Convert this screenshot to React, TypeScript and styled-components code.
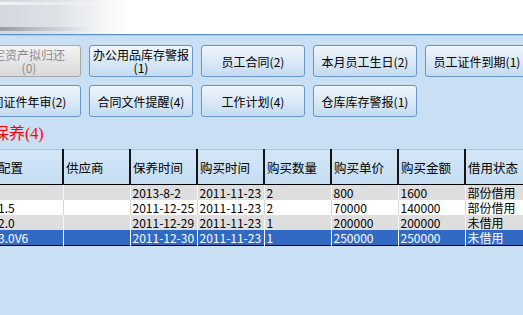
import { FC } from 'react';
import styled, { createGlobalStyle } from 'styled-components';

const GlobalStyle = createGlobalStyle`
  html, body {
    margin: 0;
    padding: 0;
    background: #ffffff;
    overflow: hidden;
  }
  body {
    font-family: "Noto Sans CJK SC", "DejaVu Sans", sans-serif;
    font-size: 12px;
  }
`;

const Page = styled.div`
  width: 523px;
  height: 315px;
  overflow: hidden;
  display: flex;
  flex-direction: column;
`;

const Banner = styled.div`
  height: 34px;
  flex: none;
  background:
    linear-gradient(to right, rgba(140, 146, 152, 0.85) 0px, rgba(170, 176, 182, 0.5) 45px, rgba(255, 255, 255, 0) 90px) 0 27px / 100% 4px no-repeat,
    linear-gradient(to right, rgba(255, 255, 255, 0.7) 0px, rgba(255, 255, 255, 0) 120px) 0 2px / 100% 3px no-repeat,
    linear-gradient(to right, #d2d8de 0px, #dde2e7 55px, #f2f4f6 100px, #ffffff 128px);
`;

const Panel = styled.div`
  flex: 1;
  border-top: 1px solid #5b94c9;
  box-shadow: inset 0 1px 0 #a9cbea;
  background: #c9dff3;
  display: flex;
  flex-direction: column;
`;

const ButtonGrid = styled.div`
  display: grid;
  grid-template-columns: repeat(5, 104px);
  grid-auto-rows: 32px;
  column-gap: 8px;
  row-gap: 8px;
  padding-top: 10px;
  margin-left: -23px;
`;

const NoticeButton = styled.button<{ $disabled?: boolean }>`
  box-sizing: border-box;
  padding: 0 2px;
  border-radius: 3px;
  border: 1px solid ${({ $disabled }) => ($disabled ? '#a8a8a8' : '#6796cb')};
  background: ${({ $disabled }) =>
    $disabled
      ? 'linear-gradient(to bottom, #f4f4f4 0%, #e6e6e6 50%, #d9d9d9 100%)'
      : 'linear-gradient(to bottom, #eef5fc 0%, #dbe9f7 50%, #c4dbf1 100%)'};
  color: ${({ $disabled }) => ($disabled ? '#8c8c8c' : '#000000')};
  font-family: "Noto Sans CJK SC", "DejaVu Sans", sans-serif;
  font-size: 12px;
  line-height: 13px;
  white-space: pre-line;
  text-align: center;
  overflow: hidden;
`;

const Title = styled.div`
  height: 32px;
  line-height: 34px;
  margin-left: -7px;
  color: #ff0000;
  font-family: "Liberation Serif", "Noto Sans CJK SC", serif;
  font-size: 16px;
`;

const Table = styled.table`
  border-collapse: collapse;
  table-layout: fixed;
  width: 536px;
  margin-left: -4px;
  border-top: 1px solid #a9cbea;
  border-bottom: 1px solid #000000;
`;

const Column = styled.col`
  width: 67px;
`;

const HeadCell = styled.th`
  height: 34px;
  padding: 0 2px;
  text-align: left;
  font-weight: normal;
  font-size: 12.5px;
  color: #000000;
  background: linear-gradient(to bottom, #d3e6f7 0%, #c5ddf2 100%);
  border-right: 2px solid #151515;
  border-bottom: 1px solid #000000;
  white-space: nowrap;
  overflow: hidden;
`;

const Row = styled.tr<{ $tone: 'grey' | 'white' | 'selected' }>`
  height: 15px;
  background: ${({ $tone }) =>
    $tone === 'selected' ? '#316ac5' : $tone === 'grey' ? '#dedede' : '#ffffff'};
  color: ${({ $tone }) => ($tone === 'selected' ? '#ffffff' : '#000000')};
  td {
    border-right: 1px solid ${({ $tone }) => ($tone === 'white' ? '#d4d4d4' : '#f6f6f6')};
  }
`;

const Cell = styled.td`
  height: 15px;
  padding: 0 2px;
  font-size: 12px;
  line-height: 15px;
  white-space: nowrap;
  overflow: hidden;
`;

const buttons: { label: string; disabled?: boolean }[] = [
  { label: '定资产拟归还\n(0)', disabled: true },
  { label: '办公用品库存警报\n(1)' },
  { label: '员工合同(2)' },
  { label: '本月员工生日(2)' },
  { label: '员工证件到期(1)' },
  { label: '同证件年审(2)' },
  { label: '合同文件提醒(4)' },
  { label: '工作计划(4)' },
  { label: '仓库库存警报(1)' },
];

const columns = ['配置', '供应商', '保养时间', '购买时间', '购买数量', '购买单价', '购买金额', '借用状态'];

const rows: { tone: 'grey' | 'white' | 'selected'; cells: string[] }[] = [
  { tone: 'grey', cells: ['', '', '2013-8-2', '2011-11-23', '2', '800', '1600', '部份借用'] },
  { tone: 'white', cells: ['1.5', '', '2011-12-25', '2011-11-23', '2', '70000', '140000', '部份借用'] },
  { tone: 'grey', cells: ['2.0', '', '2011-12-29', '2011-11-23', '1', '200000', '200000', '未借用'] },
  { tone: 'selected', cells: ['3.0V6', '', '2011-12-30', '2011-11-23', '1', '250000', '250000', '未借用'] },
];

const App: FC = () => {
  return (
    <Page>
      <GlobalStyle />
      <Banner />
      <Panel>
        <ButtonGrid>
          {buttons.map((b) => (
            <NoticeButton key={b.label} $disabled={b.disabled}>
              {b.label}
            </NoticeButton>
          ))}
        </ButtonGrid>
        <Title>保养(4)</Title>
        <Table>
          <colgroup>
            {columns.map((c) => (
              <Column key={c} />
            ))}
          </colgroup>
          <thead>
            <tr>
              {columns.map((c) => (
                <HeadCell key={c}>{c}</HeadCell>
              ))}
            </tr>
          </thead>
          <tbody>
            {rows.map((r, i) => (
              <Row key={i} $tone={r.tone}>
                {r.cells.map((c, j) => (
                  <Cell key={j}>{c}</Cell>
                ))}
              </Row>
            ))}
          </tbody>
        </Table>
      </Panel>
    </Page>
  );
};

export default App;
